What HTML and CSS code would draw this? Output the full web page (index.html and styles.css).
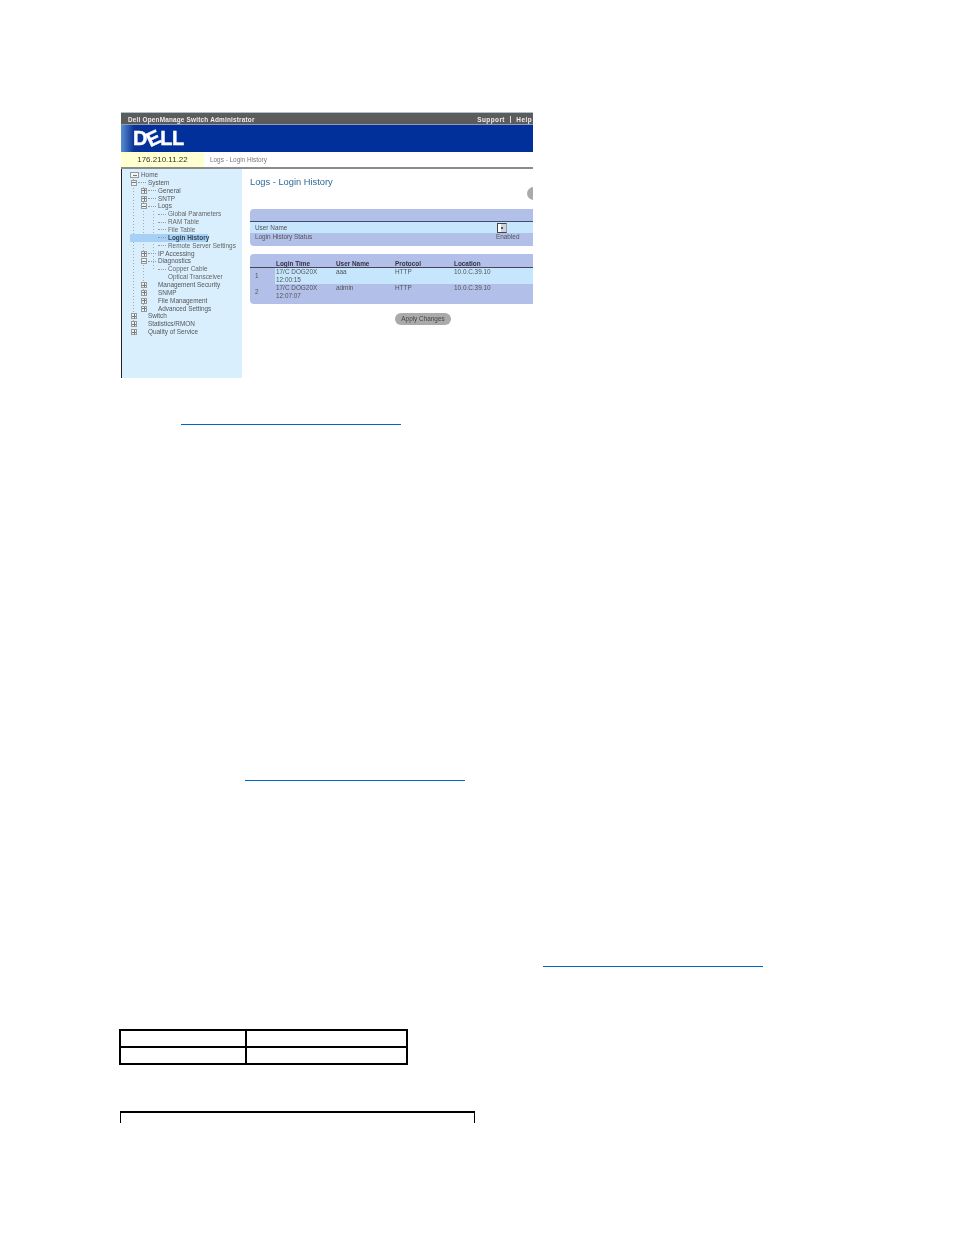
FILE: index.html
```html
<!DOCTYPE html>
<html lang="en">

<head>
    <meta charset="UTF-8">
    <title>Logs - Login History</title>
    <link rel="stylesheet" href="styles.css">
</head>

<body>
    <!-- console screenshot -->
    <div class="console">
        <div class="title-bar">
            <span>Dell OpenManage Switch Administrator</span>
            <span class="title-links">Support <i></i> Help</span>
        </div>
        <div class="brand-bar">
            <span class="logo">D<b>E</b>LL</span>
        </div>
        <div class="info-bar">
            <div class="ip">176.210.11.22</div>
            <div class="crumb">Logs - Login History</div>
        </div>
        <div class="console-body">
            <ul class="tree">
                <li class="lv0 open">Home</li>
                <li class="lv1 open">System</li>
                <li class="lv2 plus">General</li>
                <li class="lv2 plus">SNTP</li>
                <li class="lv2 open">Logs</li>
                <li class="lv3">Global Parameters</li>
                <li class="lv3">RAM Table</li>
                <li class="lv3">File Table</li>
                <li class="lv3 on"><span>Login History</span></li>
                <li class="lv3">Remote Server Settings</li>
                <li class="lv2 plus">IP Accessing</li>
                <li class="lv2 open">Diagnostics</li>
                <li class="lv3">Copper Cable</li>
                <li class="lv3 nodash">Optical Transceiver</li>
                <li class="lv2 plus nodash">Management Security</li>
                <li class="lv2 plus nodash">SNMP</li>
                <li class="lv2 plus nodash">File Management</li>
                <li class="lv2 plus nodash">Advanced Settings</li>
                <li class="lv1 plus nodash">Switch</li>
                <li class="lv1 plus nodash">Statistics/RMON</li>
                <li class="lv1 plus nodash">Quality of Service</li>
            </ul>
            <div class="main">
                <h1>Logs - Login History</h1>
                <div class="help-dot"></div>
                <div class="panel panel-top">
                    <div class="form-row light">
                        <span>User Name</span>
                        <span class="select-box"><i></i></span>
                    </div>
                    <div class="form-row">
                        <span>Login History Status</span>
                        <span class="status">Enabled</span>
                    </div>
                </div>
                <div class="panel panel-list">
                    <div class="list-row list-head">
                        <span></span>
                        <span>Login Time</span>
                        <span>User Name</span>
                        <span>Protocol</span>
                        <span>Location</span>
                    </div>
                    <div class="list-row light">
                        <span class="num">1</span>
                        <span>17/C DOG20X<br>12:00:15</span>
                        <span>aaa</span>
                        <span>HTTP</span>
                        <span>10.0.C.39.10</span>
                    </div>
                    <div class="list-row">
                        <span class="num">2</span>
                        <span>17/C DOG20X<br>12:07:07</span>
                        <span>admin</span>
                        <span>HTTP</span>
                        <span>10.0.C.39.10</span>
                    </div>
                </div>
                <div class="actions">
                    <a class="apply" href="#">Apply Changes</a>
                </div>
            </div>
        </div>
    </div>

    <a class="doc-link link-a" href="#"></a>
    <a class="doc-link link-b" href="#"></a>
    <a class="doc-link link-c" href="#"></a>

    <table class="doc-table">
        <tr>
            <td class="col-a"></td>
            <td class="col-b"></td>
        </tr>
        <tr>
            <td></td>
            <td></td>
        </tr>
    </table>

    <div class="cut-table"></div>
</body>

</html>
```

FILE: styles.css
```css
html,
body,
div,
ul,
li,
h1 {
    padding: 0;
    margin: 0;
}

ul {
    list-style: none;
}

a {
    text-decoration: none;
    color: #000;
}

body {
    background-color: #fff;
    font-family: "Liberation Sans", Arial, sans-serif;
    padding-top: 112px;
    height: 1123px;
    overflow: hidden;
}

.console {
    width: 412px;
    height: 266px;
    margin-left: 121px;
    overflow: hidden;
    font-size: 6.4px;
    color: #555;
    filter: blur(.4px);
}

/* top bars */

.title-bar {
    height: 13px;
    box-sizing: border-box;
    padding: 3px 1px 0 7px;
    display: flex;
    justify-content: space-between;
    background-color: #5c5c5c;
    border-top: 1px solid #a9c4d0;
    border-bottom: 1px solid #8f9bb8;
    color: #eee;
    font-weight: bold;
    letter-spacing: .2px;
    line-height: 7px;
}

.title-links {
    letter-spacing: .45px;
}

.title-links i {
    display: inline-block;
    width: 1px;
    height: 7px;
    margin: 0 3px;
    background-color: #ddd;
    vertical-align: top;
}

.brand-bar {
    height: 27px;
    box-sizing: border-box;
    padding-left: 12px;
    background: linear-gradient(to right, #5b8fd0, #0a3296 13px, #02309a 30px);
}

.logo {
    color: #fff;
    font-size: 20px;
    font-weight: bold;
    line-height: 27px;
    letter-spacing: -.3px;
    -webkit-text-stroke: .4px #fff;
}

.logo b {
    display: inline-block;
    transform: rotate(-25deg);
}

.info-bar {
    display: flex;
    height: 15px;
    line-height: 15px;
}

.ip {
    width: 83px;
    background-color: #ffffcf;
    text-align: center;
    color: #333;
    font-size: 8px;
}

.crumb {
    padding-left: 6px;
    color: #777;
}

.console-body {
    display: flex;
    height: 211px;
    border-top: 2px solid #8b8b8b;
}

/* left tree */

.tree {
    width: 120px;
    padding-top: 2px;
    border-left: 1px solid #222;
    background-color: #d9effd;
    background-image:
        repeating-linear-gradient(to bottom, #aaa 0, #aaa 1px, transparent 1px, transparent 3px),
        repeating-linear-gradient(to bottom, #aaa 0, #aaa 1px, transparent 1px, transparent 3px),
        repeating-linear-gradient(to bottom, #aaa 0, #aaa 1px, transparent 1px, transparent 3px);
    background-repeat: no-repeat;
    background-size: 1px 155px, 1px 120px, 1px 60px;
    background-position: 11px 10px, 21px 18px, 31px 42px;
    color: #666;
    white-space: nowrap;
}

.tree li {
    position: relative;
    display: flex;
    align-items: center;
    height: 7.87px;
    line-height: 7.87px;
}

.tree li::before {
    content: "";
    flex: none;
    width: 8px;
    margin-right: 2px;
    border-top: 1px dotted #999;
}

/* expander box on the branch */
.tree .plus::after,
.tree .open::after {
    content: "";
    position: absolute;
    top: 1px;
    width: 4px;
    height: 4px;
    border: 1px solid #999;
    background: linear-gradient(#777, #777) center / 4px 1px no-repeat #eef6fc;
}

.tree .plus::after {
    background:
        linear-gradient(#777, #777) center / 4px 1px no-repeat,
        linear-gradient(#777, #777) center / 1px 4px no-repeat #eef6fc;
}

.tree .lv0 {
    padding-left: 8px;
}

.tree .lv0::before {
    width: 6px;
    margin-right: 5px;
    border-top: 0;
}

.tree .lv0::after {
    left: 8px;
    width: 7px;
}

.tree .lv1 {
    padding-left: 16px;
}

.tree .lv1::after {
    left: 9px;
}

.tree .lv2 {
    padding-left: 26px;
}

.tree .lv2::after {
    left: 19px;
}

.tree .lv3 {
    padding-left: 36px;
}

.tree .nodash::before {
    border-top: 0;
}

.tree .on {
    margin-left: 8px;
    padding-left: 28px;
    background-color: #a6d0f6;
    width: 78px;
    box-sizing: border-box;
    color: #345;
    font-weight: bold;
}

.tree .plus,
.tree .open {
    color: #555;
}

/* right side */

.main {
    flex: 1;
    position: relative;
    min-width: 0;
    padding: 8px 0 0 8px;
    background-color: #fff;
}

h1 {
    height: 32px;
    font-size: 9.3px;
    font-weight: normal;
    line-height: 11px;
    color: #2d6a96;
}

.help-dot {
    position: absolute;
    top: 18px;
    right: -7px;
    width: 13px;
    height: 13px;
    border-radius: 50%;
    background-color: #aaa;
}

.panel {
    width: 300px;
    box-sizing: border-box;
    background-color: #b2bfe9;
    background-image: radial-gradient(#a5b3e3 .5px, transparent .7px);
    background-size: 2px 2px;
    border-radius: 4px;
}

.panel-top {
    height: 37px;
    padding-top: 12px;
    margin-bottom: 8px;
}

.form-row {
    display: flex;
    justify-content: space-between;
    height: 9px;
    padding: 0 0 0 5px;
    line-height: 7px;
}

.form-row.light {
    height: 11px;
    line-height: 11px;
    border-top: 1px solid #444a6a;
    background-color: #c6e6fd;
}

.select-box {
    width: 10px;
    height: 10px;
    margin: 1px 43px 0 0;
    box-sizing: border-box;
    border: 1px solid #444;
    border-right-color: #999;
    background: linear-gradient(to right, #fff 3px, #cfd3dc 3px);
}

.select-box i {
    display: block;
    width: 2px;
    height: 2px;
    margin: 3px 0 0 3px;
    background-color: #555;
}

.status {
    width: 54px;
}

.panel-list {
    height: 50px;
    padding-top: 6px;
}

.list-row {
    display: grid;
    grid-template-columns: 25px 60px 59px 59px 1fr;
    padding-left: 1px;
    line-height: 7.6px;
}

.list-row.list-head {
    height: 7px;
    line-height: 7px;
    border-bottom: 1px solid #445;
    color: #334;
    font-weight: bold;
}

.list-row.light {
    height: 16px;
    background: linear-gradient(to right, transparent 25px, #c6e6fd 25px);
}

.list-row .num {
    padding: 4px 0 0 4px;
}

.actions {
    width: 201px;
    margin-top: 9px;
    display: flex;
    justify-content: flex-end;
}

.apply {
    width: 56px;
    height: 12px;
    border-radius: 6px;
    background-color: #aaa;
    color: #444;
    line-height: 12px;
    text-align: center;
}

/* document below */

.doc-link {
    display: block;
    width: 220px;
    height: 1px;
    background-color: #0066cc;
}

.link-a {
    margin: 46px 0 0 181px;
}

.link-b {
    margin: 355px 0 0 245px;
}

.link-c {
    margin: 185px 0 0 543px;
}

.doc-table {
    margin: 62px 0 0 119px;
    border-collapse: collapse;
    border: 2px solid #000;
}

.doc-table td {
    height: 15px;
    padding: 0;
    border: 2px solid #000;
}

.col-a {
    width: 124px;
}

.col-b {
    width: 159px;
}

.cut-table {
    width: 355px;
    height: 12px;
    margin: 46px 0 0 120px;
    box-sizing: border-box;
    border: 1px solid #000;
    border-top-width: 2px;
    border-bottom: 0;
}
```
